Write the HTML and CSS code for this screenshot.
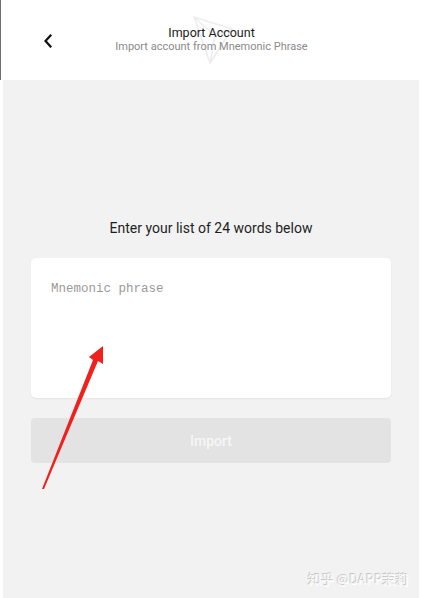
FILE: index.html
```html
<!DOCTYPE html>
<html lang="en">
<head>
    <meta charset="UTF-8">
    <meta name="viewport" content="width=device-width, initial-scale=1.0">
    <title>Import Account</title>
    <link rel="stylesheet" href="styles.css">
</head>
<body>

<div class="page">
    <header class="topbar">
        <button class="back" aria-label="Back">
            <svg width="10" height="14" viewBox="0 0 10 14">
                <path d="M7.5 1.5 L2.5 7 L7.5 12.5" fill="none" stroke="#111" stroke-width="2.2" stroke-linecap="square"/>
            </svg>
        </button>
        <div class="titles">
            <!-- faint logo behind the title -->
            <svg class="logo" width="46" height="52" viewBox="0 0 46 52">
                <path d="M4 3 L42 15 L20 49 Z M4 3 L25 22 L42 15 M25 22 L20 49" fill="none" stroke="#ededed" stroke-width="1.5" stroke-linejoin="round"/>
            </svg>
            <div class="title">Import Account</div>
            <div class="subtitle">Import account from Mnemonic Phrase</div>
        </div>
    </header>

    <main class="content">
        <p class="prompt">Enter your list of 24 words below</p>
        <textarea class="phrase" placeholder="Mnemonic phrase"></textarea>
        <button class="import" disabled>Import</button>
    </main>
</div>

<!-- annotation arrow drawn over the screenshot -->
<svg class="arrow" width="422" height="598" viewBox="0 0 422 598">
    <path d="M42 489 L93 360 L89 357 L103 346 L103 364 L98 361 L44 489 Z" fill="#f0201c"/>
</svg>

<div class="watermark">知乎 @DAPP茉莉</div>

</body>
</html>
```

FILE: styles.css
```css
body {
    margin: 0;
    background-color: #fff;
    font-family: Roboto, "Noto Sans", sans-serif;
}
.page {
    width: 422px;
    height: 598px;
    display: flex;
    flex-direction: column;
    overflow: hidden;
}
.topbar {
    height: 80px;
    flex-shrink: 0;
    display: flex;
    align-items: center;
    position: relative;
    border-left: 1px solid #6e6e6e;
}
.back {
    position: absolute;
    left: 37px;
    top: 33px;
    width: 20px;
    height: 16px;
    padding: 0;
    border: none;
    background: none;
    display: flex;
    align-items: center;
    justify-content: center;
}
.titles {
    flex: 1;
    display: flex;
    flex-direction: column;
    align-items: center;
    padding-bottom: 1px;
    position: relative;
}
.logo {
    position: absolute;
    left: 189px;
    top: -12px;
}
.title {
    font-size: 12.5px;
    color: #222;
    line-height: 14px;
    position: relative;
}
.subtitle {
    font-size: 11px;
    color: #8a8a8a;
    line-height: 14px;
    position: relative;
}
.content {
    flex: 1;
    margin: 0 3px 0 3px;
    background-color: #f2f2f2; /* svetlo siva pozadina */
    display: flex;
    flex-direction: column;
    padding: 138px 28px 0 28px;
}
.prompt {
    margin: 0 0 20px 0;
    text-align: center;
    font-size: 14px;
    color: #1e1e1e;
    line-height: 20px;
}
.phrase {
    height: 140px;
    box-sizing: border-box;
    border: none;
    border-radius: 5px;
    background-color: #fff;
    box-shadow: 0 1px 2px rgba(0, 0, 0, 0.06);
    padding: 24px 20px;
    font-family: "Liberation Mono", monospace;
    font-size: 12.5px;
    resize: none;
    outline: none;
}
.phrase::placeholder {
    color: #9a9a9a;
}
.import {
    margin-top: 20px;
    height: 45px;
    border: none;
    border-radius: 4px;
    background-color: #e3e3e3;
    color: #f6f6f6;
    font-family: Roboto, sans-serif;
    font-size: 14px;
    font-weight: 500;
}
.arrow {
    position: absolute;
    left: 0;
    top: 0;
    pointer-events: none;
}
.watermark {
    position: absolute;
    left: 308px;
    top: 569px;
    font-family: "Noto Sans CJK SC", sans-serif;
    font-size: 13px;
    color: #f4f4f4;
    text-shadow: -1px -1px 0 #c8c8c8, 1px 1px 0 #fff;
}
```
